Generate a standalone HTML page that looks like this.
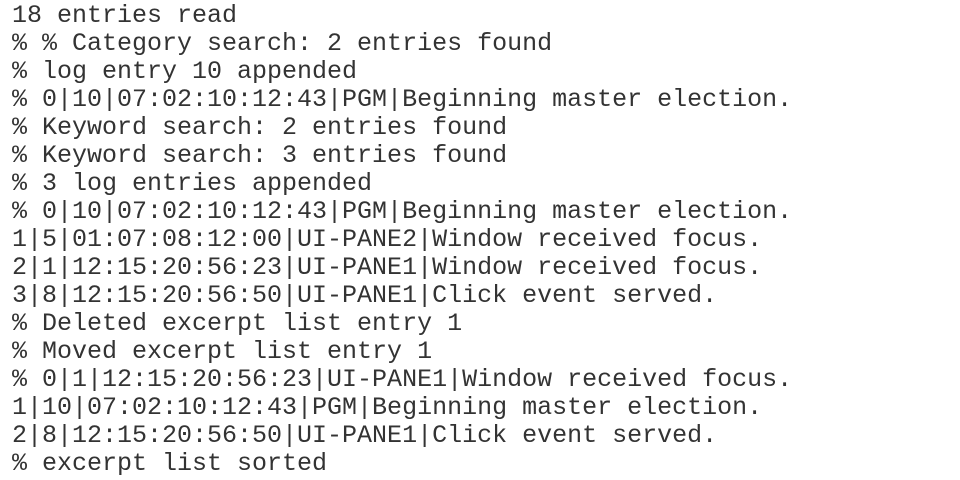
<!DOCTYPE html>
<html><head><meta charset="utf-8"><style>
html,body{margin:0;padding:0;background:#fff;width:960px;height:480px;overflow:hidden}
pre{margin:0;position:absolute;left:12px;top:2px;font-family:"Liberation Mono",monospace;font-size:25px;line-height:28px;color:#333}
</style></head><body><pre>18 entries read
% % Category search: 2 entries found
% log entry 10 appended
% 0|10|07:02:10:12:43|PGM|Beginning master election.
% Keyword search: 2 entries found
% Keyword search: 3 entries found
% 3 log entries appended
% 0|10|07:02:10:12:43|PGM|Beginning master election.
1|5|01:07:08:12:00|UI-PANE2|Window received focus.
2|1|12:15:20:56:23|UI-PANE1|Window received focus.
3|8|12:15:20:56:50|UI-PANE1|Click event served.
% Deleted excerpt list entry 1
% Moved excerpt list entry 1
% 0|1|12:15:20:56:23|UI-PANE1|Window received focus.
1|10|07:02:10:12:43|PGM|Beginning master election.
2|8|12:15:20:56:50|UI-PANE1|Click event served.
% excerpt list sorted</pre></body></html>
